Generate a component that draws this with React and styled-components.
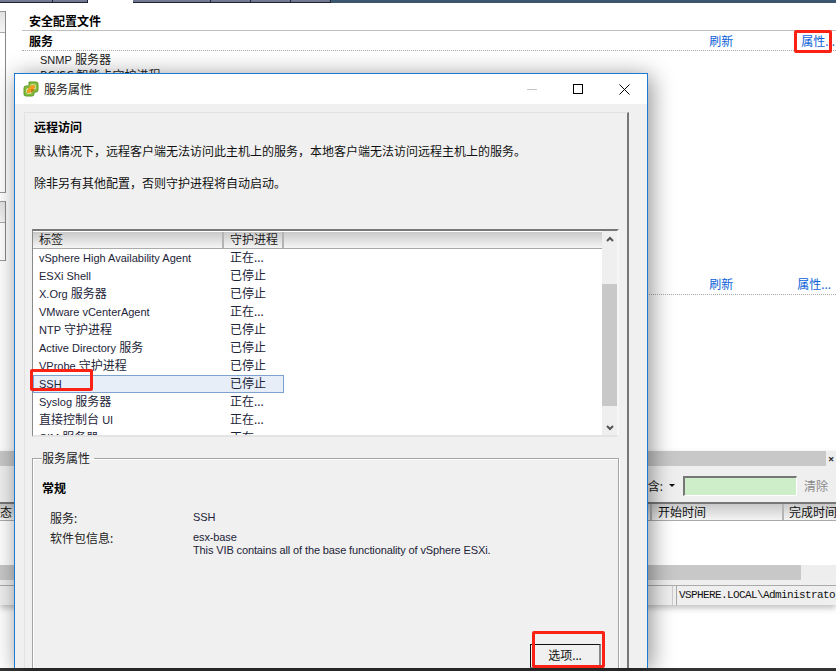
import React from 'react'
import styled, { createGlobalStyle } from 'styled-components'

const GlobalStyle = createGlobalStyle`
  html, body {
    margin: 0;
    padding: 0;
    background: #fff;
  }
  body {
    font-family: "Noto Sans", "Noto Sans CJK SC", sans-serif;
    font-size: 12px;
    color: #111;
  }
`

const Page = styled.div`
  position: relative;
  display: flex;
  flex-direction: column;
  width: 836px;
  height: 671px;
  overflow: hidden;
  background: #fff;
`
const Latin = styled.span`
  font-family: "Liberation Sans", sans-serif;
  font-size: 11px;
`

/* background application */
const TabStrip = styled.div`
  display: flex;
  flex: none;
  height: 3px;
  background: #3c566f;
`
const Tab = styled.div`
  width: ${p => p.$w}px;
  box-sizing: border-box;
  background: ${p => (p.$active ? '#fff' : '#717a90')};
  border-bottom: ${p => (p.$active ? 'none' : '1px solid #1d2333')};
  border-right: ${p => (p.$active ? 'none' : '1px solid #1d2333')};
`
const Upper = styled.div`
  display: flex;
  flex: none;
  height: 448px;
`
const Sidebar = styled.div`
  display: flex;
  flex-direction: column;
  flex: none;
  gap: 8px;
  width: 6px;
  padding-top: 8px;
`
const SidePanel = styled.div`
  box-sizing: border-box;
  height: ${p => p.$h}px;
  border-top: 1px solid #999;
  border-right: 1px solid #888;
  border-bottom: 1px solid #999;
`
const SideHeader = styled.div`
  height: 20px;
  background: linear-gradient(#e2e2e2, #f5f5f5);
  border-bottom: 1px solid #aaa;
`
const Content = styled.div`
  flex: 1;
  padding-left: 16px;
`
const ProfileTitle = styled.div`
  box-sizing: border-box;
  height: 28px;
  padding: 9px 0 0 7px;
  font-size: 12px;
  line-height: 19px;
  font-weight: 700;
  color: #000;
  border-bottom: 1px solid #c0c0c0;
`
const SectionRow = styled.div`
  display: flex;
  align-items: center;
  justify-content: space-between;
  box-sizing: border-box;
  height: 20px;
  padding: 0 ${p => p.$right}px ${p => p.$bottom}px 7px;
  border-bottom: 1px dotted #aaa;
`
const SectionName = styled.span`
  font-weight: 700;
  color: #000;
`
const Links = styled.div`
  display: flex;
  gap: ${p => p.$gap}px;
`
const LinkText = styled.span`
  color: #0a5fd8;
`
const ServiceList = styled.div`
  height: 223px;
  padding: 1px 0 0 18px;
  line-height: 15px;
  color: #222;
`

const BottomPanel = styled.div`
  flex: none;
  height: 154px;
  background: #efefef;
  box-shadow: 0 3px 6px rgba(0, 0, 0, 0.25);
`
const HScroll = styled.div`
  display: flex;
  height: 15px;
  background: #eee;
`
const HThumb = styled.div`
  width: ${p => p.$w}px;
  background: #c8c8c8;
`
const PanelClose = styled.span`
  margin-left: 2px;
  font-size: 11px;
  line-height: 15px;
  font-weight: 700;
  color: #333;
`
const FilterBar = styled.div`
  display: flex;
  align-items: center;
  justify-content: flex-end;
  box-sizing: border-box;
  height: 38px;
  padding: 3px 8px 0 0;
  border-bottom: 2px solid #777;
`
const FilterLabel = styled.span`
  color: #222;
`
const DropArrow = styled.span`
  width: 0;
  height: 0;
  margin: 0 8px 0 6px;
  border-left: 3px solid transparent;
  border-right: 3px solid transparent;
  border-top: 3px solid #111;
`
const FilterInput = styled.div`
  box-sizing: border-box;
  width: 114px;
  height: 20px;
  background: #cdeec9;
  border-top: 2px solid #777;
  border-left: 2px solid #777;
  border-right: 1px solid #fff;
  border-bottom: 1px solid #fff;
`
const ClearText = styled.span`
  margin-left: 7px;
  color: #8a8a8a;
`
const TaskHeader = styled.div`
  display: flex;
  height: 16px;
  margin-left: -12px;
  line-height: 17px;
  background: linear-gradient(#c9c9c9, #f4f4f4);
  border-bottom: 1px solid #aaa;
`
const TaskCol = styled.div`
  flex: none;
  box-sizing: border-box;
  width: ${p => p.$w}px;
  padding-left: ${p => p.$pad}px;
  white-space: nowrap;
  color: #111;
  border-right: 2px solid #b4b4b4;
`
const TaskBody = styled.div`
  height: 44px;
  background: #fff;
`
const StatusBar = styled.div`
  display: flex;
  gap: 3px;
  height: 20px;
  margin-top: 5px;
  border-top: 1px solid #aaa;
`
const StatusField = styled.div`
  flex: none;
  box-sizing: border-box;
  width: ${p => p.$w}px;
  height: 19px;
  padding-left: 2px;
  font-family: "Liberation Mono", "Noto Sans CJK SC", monospace;
  font-size: 11px;
  line-height: 19px;
  letter-spacing: -0.6px;
  white-space: nowrap;
  color: #111;
  border-left: ${p => (p.$framed ? '1px solid #aaa' : 'none')};
  border-right: ${p => (p.$framed ? 'none' : '1px solid #ccc')};
`
const Filler = styled.div`
  flex: 1;
`
const BottomEdge = styled.div`
  flex: none;
  height: 3px;
  background: #333;
`

/* dialog window */
const DialogShadow = styled.div`
  position: absolute;
  top: 73px;
  left: 14px;
  width: 634px;
  height: 595px;
  box-shadow: 3px 3px 22px rgba(0, 0, 0, 0.45);
`
const Dialog = styled.div`
  position: absolute;
  top: 73px;
  left: 14px;
  display: flex;
  flex-direction: column;
  box-sizing: border-box;
  width: 634px;
  height: 595px;
  overflow: hidden;
  background: #f0f0f0;
  border: 1px solid #1a7ad4;
  border-bottom: none;
`
const TitleBar = styled.div`
  display: flex;
  align-items: center;
  flex: none;
  height: 30px;
  padding: 0 0 0 8px;
  background: #fff;
`
const TitleText = styled.span`
  flex: 1;
  margin-left: 5px;
  color: #222;
`
const WinButton = styled.span`
  display: flex;
  align-items: center;
  justify-content: center;
  width: 46px;
  height: 30px;
`
const DialogBody = styled.div`
  flex: 1;
  min-height: 0;
  padding: 8px 18px 0 9px;
`
const InnerPanel = styled.div`
  box-sizing: border-box;
  height: 100%;
  padding: 6px 8px 0 8px;
  border-top: 1px solid #e2e2e2;
  border-left: 1px solid #e2e2e2;
  border-right: 2px solid #777;
`
const PanelHeading = styled.div`
  height: 18px;
  padding-left: 1px;
  line-height: 18px;
  font-weight: 700;
  color: #000;
`
const Paragraph = styled.p`
  margin: ${p => p.$mt}px 0 0;
  padding-left: 1px;
  line-height: 18px;
  color: #111;
`
const ListFrame = styled.div`
  display: flex;
  box-sizing: border-box;
  height: 208px;
  margin-top: 36px;
  margin-left: -1px;
  background: #fff;
  border-top: 2px solid #777;
  border-left: 1px solid #8a8a8a;
  border-right: 2px solid #f6f6f6;
  border-bottom: 2px solid #e4e4e4;
`
const ListMain = styled.div`
  flex: 1;
  min-width: 0;
  overflow: hidden;
`
const ListHeader = styled.div`
  display: flex;
  height: 16px;
  margin-top: 1px;
  line-height: 16px;
  background: linear-gradient(#c9c9c9, #f5f5f5);
  border-bottom: 1px solid #aaa;
`
const HeaderCell = styled.div`
  box-sizing: border-box;
  width: ${p => p.$w}px;
  padding-left: 6px;
  color: #222;
  border-right: 2px solid #b4b4b4;
`
const Row = styled.div`
  display: grid;
  grid-template-columns: 191px 60px;
  box-sizing: border-box;
  width: 251px;
  height: 18px;
  line-height: 17px;
  color: #1c2438;
  background: ${p => (p.$selected ? '#e8eef7' : 'transparent')};
  outline: ${p => (p.$selected ? '1px solid #7da2ce' : 'none')};
  outline-offset: -1px;
`
const Cell = styled.span`
  padding-left: 6px;
  white-space: nowrap;
`
const Scrollbar = styled.div`
  display: flex;
  flex-direction: column;
  align-items: center;
  flex: none;
  width: 15px;
  background: #efefef;
`
const ScrollButton = styled.div`
  display: flex;
  align-items: center;
  justify-content: center;
  flex: none;
  height: 15px;
`
const ScrollThumb = styled.div`
  flex: none;
  align-self: stretch;
  height: 122px;
  margin-top: 38px;
  background: #c8c8c8;
`
const ScrollGap = styled.div`
  flex: 1;
`
const GroupBox = styled.fieldset`
  box-sizing: border-box;
  height: 240px;
  margin: 13px 0 0 -1px;
  padding: 14px 10px 0 9px;
  border: 1px solid #a4a4a4;
  box-shadow: 1px 1px 0 #fff, inset 1px 1px 0 #fff;
`
const GroupLegend = styled.legend`
  padding: 2px 4px 0 0;
  line-height: 14px;
  color: #222;
`
const GroupHeading = styled.div`
  height: 18px;
  line-height: 18px;
  font-weight: 700;
  color: #000;
`
const InfoGrid = styled.div`
  display: grid;
  grid-template-columns: 143px 1fr;
  row-gap: 7px;
  margin: 14px 0 0 8px;
  line-height: 13px;
  color: #222;
`
const InfoValue = styled.div`
  margin-top: -1px;
  font-family: "Liberation Sans", sans-serif;
  font-size: 11px;
  letter-spacing: -0.12px;
  color: #1c2438;
`
const ButtonRow = styled.div`
  display: flex;
  justify-content: flex-end;
  height: 24px;
  margin-top: 87px;
  padding-right: 7px;
`
const OptionButton = styled.div`
  box-sizing: border-box;
  width: 71px;
  height: 24px;
  text-align: center;
  line-height: 22px;
  color: #111;
  background: #f0f0f0;
  border-top: 1px solid #111;
  border-left: 1px solid #111;
  border-right: 2px solid #888;
  border-bottom: 1px solid #888;
`
const Callout = styled.div`
  position: absolute;
  top: ${p => p.$top}px;
  left: ${p => p.$left}px;
  box-sizing: border-box;
  width: ${p => p.$w}px;
  height: ${p => p.$h}px;
  border: 3px solid #fb2114;
  border-radius: 2px;
`

const tabs = [53, 35, 45, 78, 40, 40, 40]

const services = [
  [<Latin>vSphere High Availability Agent</Latin>, '正在...'],
  [<Latin>ESXi Shell</Latin>, '已停止'],
  [<><Latin>X.Org</Latin> 服务器</>, '已停止'],
  [<Latin>VMware vCenterAgent</Latin>, '正在...'],
  [<><Latin>NTP</Latin> 守护进程</>, '已停止'],
  [<><Latin>Active Directory</Latin> 服务</>, '已停止'],
  [<><Latin>VProbe</Latin> 守护进程</>, '已停止'],
  [<Latin>SSH</Latin>, '已停止', true],
  [<><Latin>Syslog</Latin> 服务器</>, '正在...'],
  [<>直接控制台 <Latin>UI</Latin></>, '正在...'],
  [<><Latin>CIM</Latin> 服务器</>, '正在...'],
]

const VsphereIcon = () => (
  <svg width="16" height="16" viewBox="0 0 16 16">
    <path
      d="M6 1h7a2 2 0 0 1 2 2v6a2 2 0 0 1-2 2h-2v2a2 2 0 0 1-2 2H3a2 2 0 0 1-2-2V7a2 2 0 0 1 2-2h3z"
      fill="#84bd3c"
      stroke="#5c9a24"
    />
    <rect x="3.5" y="7.5" width="5" height="5" rx="1" fill="#fff" />
    <rect x="7.5" y="3.5" width="5" height="5" rx="1" fill="#fff" />
    <path d="M8 4h4v3l-5 5H4V9z" fill="#f0a020" />
    <path d="M8 8h4l-4 4z" fill="#c87a10" />
  </svg>
)

const MinimizeIcon = () => (
  <svg width="10" height="10" viewBox="0 0 10 10">
    <path d="M0 5.5h10" stroke="#c4c4c4" />
  </svg>
)
const MaximizeIcon = () => (
  <svg width="10" height="10" viewBox="0 0 10 10">
    <rect x="0.5" y="0.5" width="9" height="9" fill="none" stroke="#000" />
  </svg>
)
const CloseIcon = () => (
  <svg width="11" height="11" viewBox="0 0 11 11">
    <path d="M0.5 0.5l10 10M10.5 0.5l-10 10" stroke="#000" />
  </svg>
)
const Chevron = ({ down }) => (
  <svg width="8" height="6" viewBox="0 0 8 6">
    <path d={down ? 'M1 1l3 3 3-3' : 'M1 5l3-3 3 3'} fill="none" stroke="#555" strokeWidth="2" />
  </svg>
)

const App = () => {
  return (
    <Page>
      <GlobalStyle />
      <TabStrip>
        {tabs.map((w, i) => (
          <Tab key={i} $w={w} $active={i === 2} />
        ))}
      </TabStrip>
      <Upper>
        <Sidebar>
          <SidePanel $h={182}>
            <SideHeader />
          </SidePanel>
          <SidePanel $h={60}>
            <SideHeader />
          </SidePanel>
        </Sidebar>
        <Content>
          <ProfileTitle>安全配置文件</ProfileTitle>
          <SectionRow $right={1} $bottom={0}>
            <SectionName>服务</SectionName>
            <Links $gap={68}>
              <LinkText>刷新</LinkText>
              <LinkText>属性...</LinkText>
            </Links>
          </SectionRow>
          <ServiceList>
            <div><Latin>SNMP</Latin> 服务器</div>
            <div>PC/SC 智能卡守护进程</div>
          </ServiceList>
          <SectionRow $right={5} $bottom={2}>
            <SectionName />
            <Links $gap={64}>
              <LinkText>刷新</LinkText>
              <LinkText>属性...</LinkText>
            </Links>
          </SectionRow>
        </Content>
      </Upper>
      <BottomPanel>
        <HScroll>
          <HThumb $w={826} />
          <PanelClose>×</PanelClose>
        </HScroll>
        <FilterBar>
          <FilterLabel>包含:</FilterLabel>
          <DropArrow />
          <FilterInput />
          <ClearText>清除</ClearText>
        </FilterBar>
        <TaskHeader>
          <TaskCol $w={664} $pad={0}>状态</TaskCol>
          <TaskCol $w={132} $pad={6}>开始时间</TaskCol>
          <TaskCol $w={120} $pad={5}>完成时间</TaskCol>
        </TaskHeader>
        <TaskBody />
        <HScroll>
          <HThumb $w={801} />
        </HScroll>
        <StatusBar>
          <StatusField $w={673} />
          <StatusField $w={160} $framed>VSPHERE.LOCAL\Administrator</StatusField>
        </StatusBar>
      </BottomPanel>
      <Filler />
      <BottomEdge />

      <DialogShadow />
      <Dialog>
        <TitleBar>
          <VsphereIcon />
          <TitleText>服务属性</TitleText>
          <WinButton><MinimizeIcon /></WinButton>
          <WinButton><MaximizeIcon /></WinButton>
          <WinButton><CloseIcon /></WinButton>
        </TitleBar>
        <DialogBody>
          <InnerPanel>
            <PanelHeading>远程访问</PanelHeading>
            <Paragraph $mt={6}>默认情况下，远程客户端无法访问此主机上的服务，本地客户端无法访问远程主机上的服务。</Paragraph>
            <Paragraph $mt={14}>除非另有其他配置，否则守护进程将自动启动。</Paragraph>
            <ListFrame>
              <ListMain>
                <ListHeader>
                  <HeaderCell $w={191}>标签</HeaderCell>
                  <HeaderCell $w={60}>守护进程</HeaderCell>
                </ListHeader>
                {services.map(([name, state, selected], i) => (
                  <Row key={i} $selected={selected}>
                    <Cell>{name}</Cell>
                    <Cell>{state}</Cell>
                  </Row>
                ))}
              </ListMain>
              <Scrollbar>
                <ScrollButton><Chevron /></ScrollButton>
                <ScrollThumb />
                <ScrollGap />
                <ScrollButton><Chevron down /></ScrollButton>
              </Scrollbar>
            </ListFrame>
            <GroupBox>
              <GroupLegend>服务属性</GroupLegend>
              <GroupHeading>常规</GroupHeading>
              <InfoGrid>
                <div>服务:</div>
                <InfoValue>SSH</InfoValue>
                <div>软件包信息:</div>
                <InfoValue>
                  esx-base
                  <br />
                  This VIB contains all of the base functionality of vSphere ESXi.
                </InfoValue>
              </InfoGrid>
              <ButtonRow>
                <OptionButton>选项...</OptionButton>
              </ButtonRow>
            </GroupBox>
          </InnerPanel>
        </DialogBody>
      </Dialog>

      <Callout $top={30} $left={794} $w={38} $h={23} />
      <Callout $top={369} $left={30} $w={63} $h={22} />
      <Callout $top={631} $left={532} $w={73} $h={37} />
    </Page>
  )
}

export default App
